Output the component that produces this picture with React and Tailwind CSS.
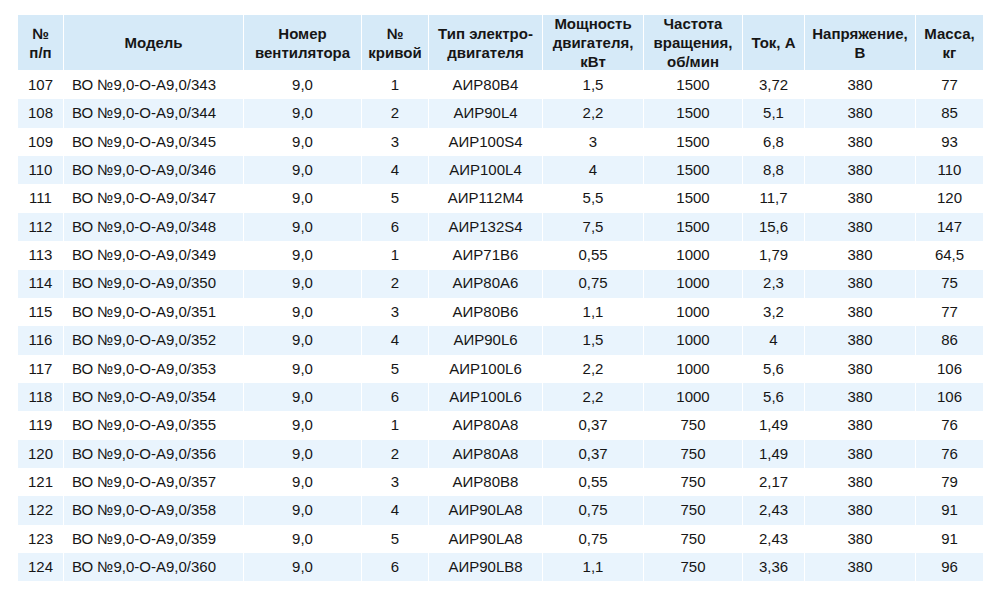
import React from "react";

const cols = [
  { w: "w-[46px]", label: ["№", "п/п"] },
  { w: "w-[180px]", label: ["Модель"] },
  { w: "w-[118px]", label: ["Номер", "вентилятора"] },
  { w: "w-[67px]", label: ["№", "кривой"] },
  { w: "w-[114px]", label: ["Тип электро-", "двигателя"] },
  { w: "w-[101px]", label: ["Мощность", "двигателя,", "кВт"] },
  { w: "w-[99px]", label: ["Частота", "вращения,", "об/мин"] },
  { w: "w-[62px]", label: ["Ток, А"] },
  { w: "w-[111px]", label: ["Напряжение,", "В"] },
  { w: "w-[67px]", label: ["Масса,", "кг"] },
];

const rows = [
  ["107", "343", "1", "АИР80В4", "1,5", "1500", "3,72", "77"],
  ["108", "344", "2", "АИР90L4", "2,2", "1500", "5,1", "85"],
  ["109", "345", "3", "АИР100S4", "3", "1500", "6,8", "93"],
  ["110", "346", "4", "АИР100L4", "4", "1500", "8,8", "110"],
  ["111", "347", "5", "АИР112М4", "5,5", "1500", "11,7", "120"],
  ["112", "348", "6", "АИР132S4", "7,5", "1500", "15,6", "147"],
  ["113", "349", "1", "АИР71В6", "0,55", "1000", "1,79", "64,5"],
  ["114", "350", "2", "АИР80А6", "0,75", "1000", "2,3", "75"],
  ["115", "351", "3", "АИР80В6", "1,1", "1000", "3,2", "77"],
  ["116", "352", "4", "АИР90L6", "1,5", "1000", "4", "86"],
  ["117", "353", "5", "АИР100L6", "2,2", "1000", "5,6", "106"],
  ["118", "354", "6", "АИР100L6", "2,2", "1000", "5,6", "106"],
  ["119", "355", "1", "АИР80А8", "0,37", "750", "1,49", "76"],
  ["120", "356", "2", "АИР80А8", "0,37", "750", "1,49", "76"],
  ["121", "357", "3", "АИР80В8", "0,55", "750", "2,17", "79"],
  ["122", "358", "4", "АИР90LА8", "0,75", "750", "2,43", "91"],
  ["123", "359", "5", "АИР90LА8", "0,75", "750", "2,43", "91"],
  ["124", "360", "6", "АИР90LВ8", "1,1", "750", "3,36", "96"],
];

export default function App() {
  return (
    <div
      className="w-[1000px] h-[595px] bg-white pt-[15px] pl-[18px] text-[#161616]"
      style={{ fontFamily: '"Liberation Sans", Arial, sans-serif' }}
    >
      <div className="flex flex-col w-[965px]">
        <div className="flex h-[56px] bg-[#d6eaf8] border-b border-white">
          {cols.map((c, i) => (
            <div
              key={i}
              className={`${c.w} shrink-0 flex flex-col items-center justify-center text-center text-[15px] leading-[19px] font-bold ${i < cols.length - 1 ? "border-r border-white" : ""}`}
            >
              {c.label.map((l, j) => (
                <span key={j}>{l}</span>
              ))}
            </div>
          ))}
        </div>
        {rows.map((r, idx) => {
          const cells = [
            r[0],
            `ВО №9,0-О-А9,0/${r[1]}`,
            "9,0",
            r[2],
            r[3],
            r[4],
            r[5],
            r[6],
            "380",
            r[7],
          ];
          return (
            <div
              key={idx}
              className={`flex h-[28.36px] ${idx % 2 === 1 ? "bg-[#e9f4fd]" : "bg-white"}`}
            >
              {cells.map((t, i) => (
                <div
                  key={i}
                  className={`${cols[i].w} shrink-0 flex items-center text-[15px] ${i === 1 ? "justify-start pl-[8px]" : "justify-center"} ${i < cols.length - 1 ? "border-r border-white" : ""}`}
                >
                  {t}
                </div>
              ))}
            </div>
          );
        })}
      </div>
    </div>
  );
}
